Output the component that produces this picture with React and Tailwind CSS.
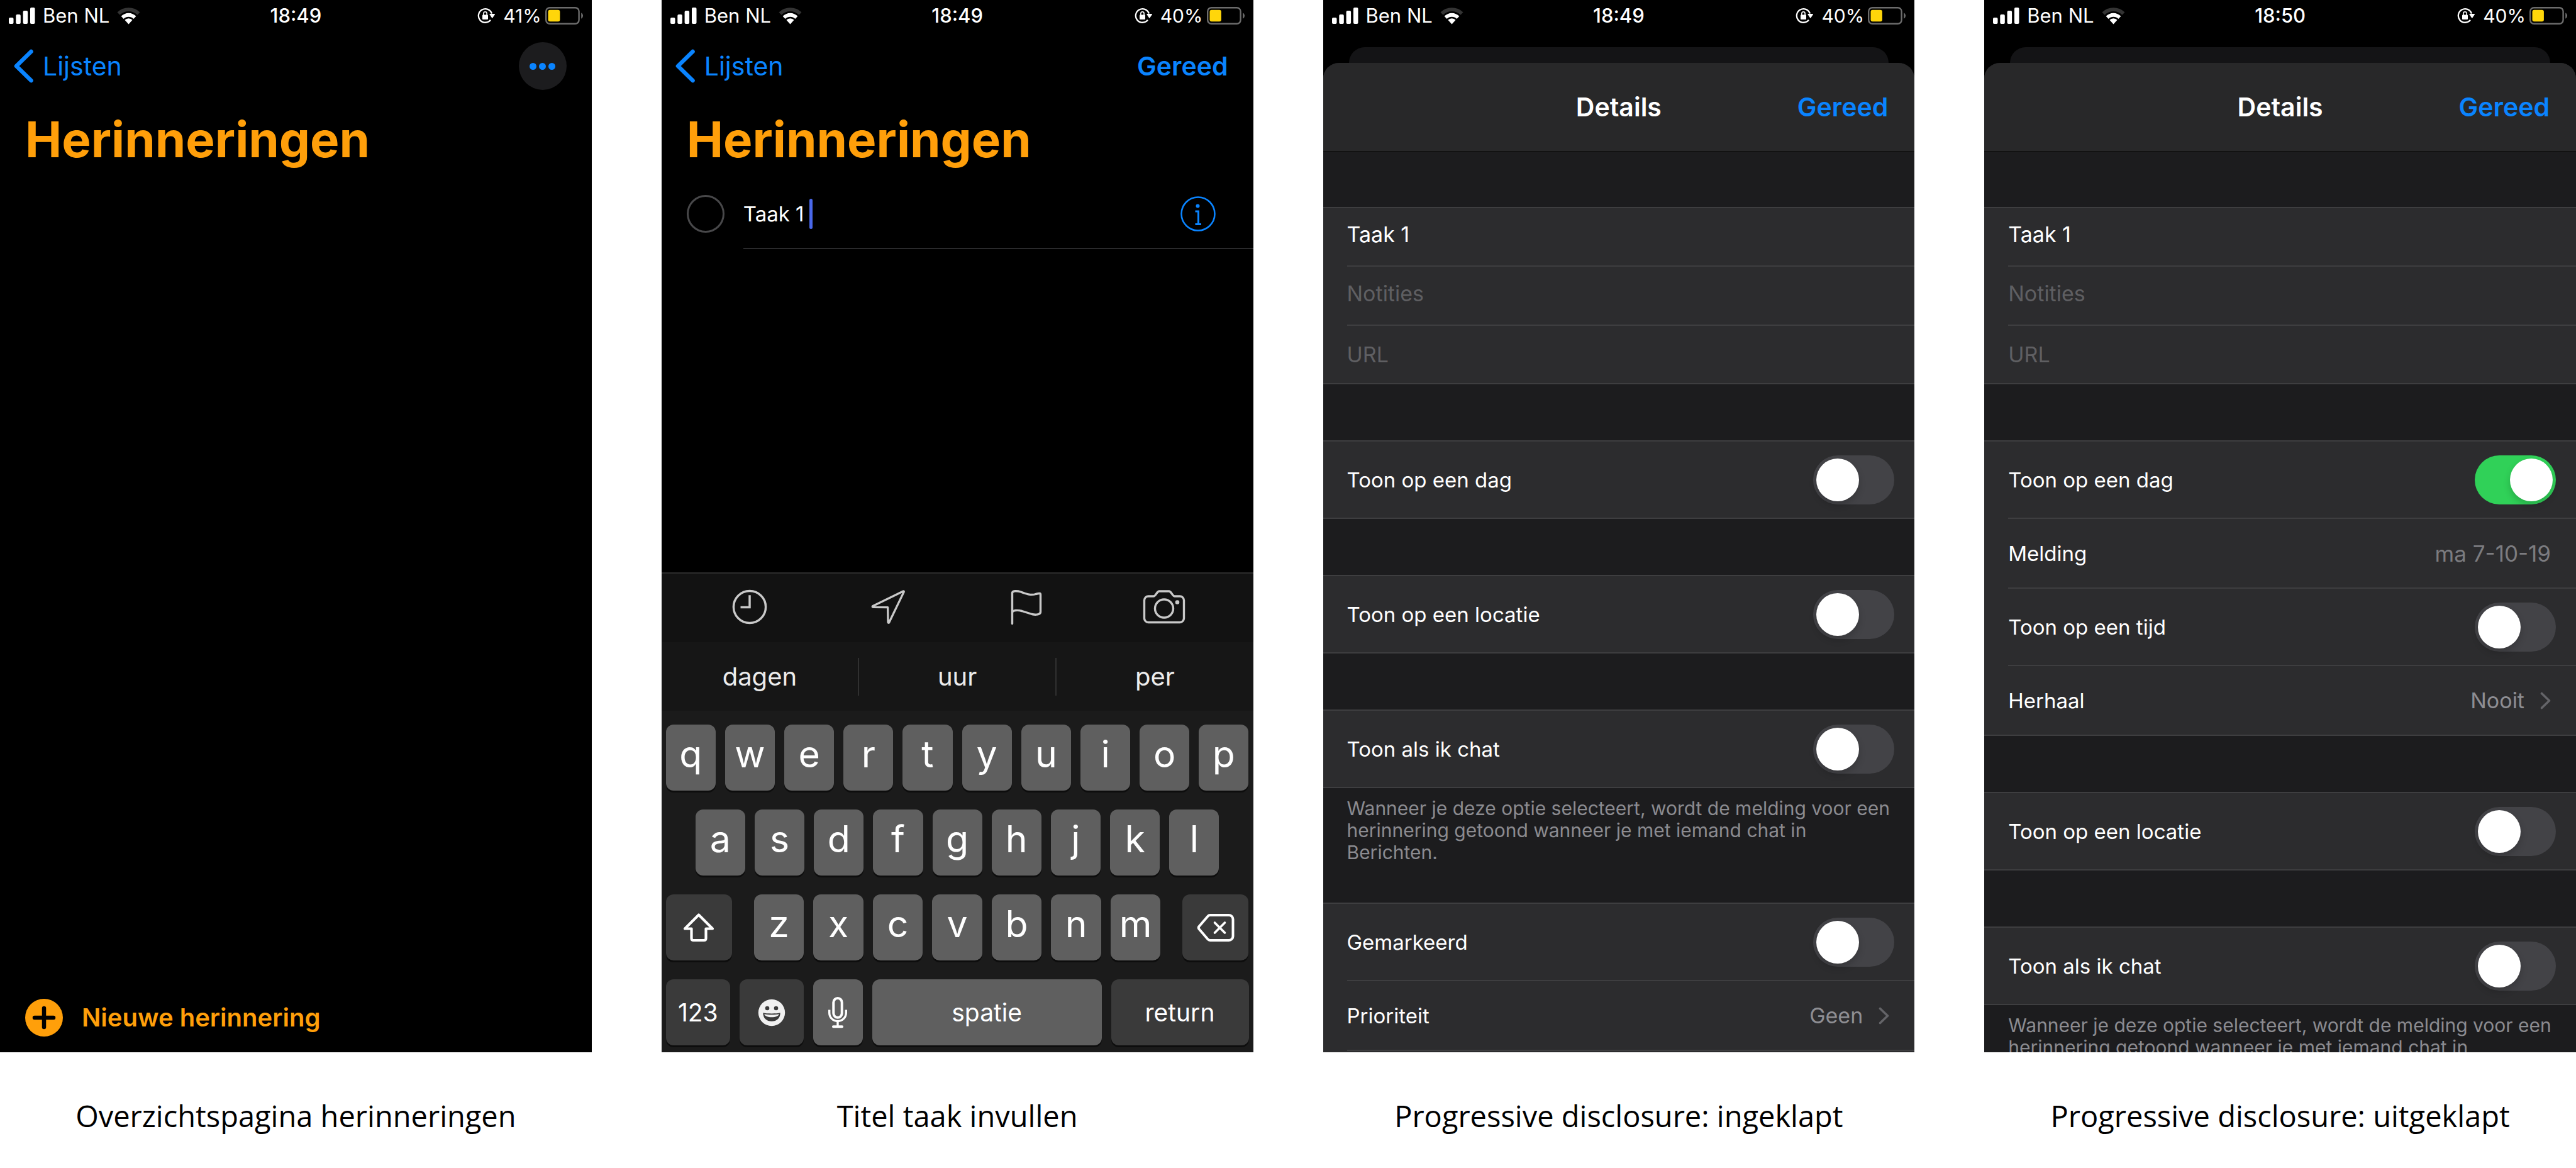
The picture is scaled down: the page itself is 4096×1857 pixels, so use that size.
import React, { useId } from "react";

function Signal() {
  return (
    <svg className="h-[26px] w-[42px]" viewBox="0 0 42 26" fill="#fff" aria-hidden="true">
      <rect x="0" y="16" width="7.5" height="10" rx="2" />
      <rect x="11.3" y="11" width="7.5" height="15" rx="2" />
      <rect x="22.6" y="5" width="7.5" height="21" rx="2" />
      <rect x="34" y="0" width="7.5" height="26" rx="2" />
    </svg>
  );
}

function Wifi() {
  return (
    <svg className="h-[27px] w-[37px]" viewBox="0 0 37 27" aria-hidden="true">
      <path d="M0.5 7.6 A25.5 25.5 0 0 1 36.5 7.6 L32.4 11.7 A19.7 19.7 0 0 0 4.6 11.7 Z" fill="#333" />
      <path d="M6.6 13.8 A16.8 16.8 0 0 1 30.4 13.8 L26.4 17.9 A11.2 11.2 0 0 0 10.6 17.9 Z" fill="#fff" />
      <path d="M12.4 19.8 A8.6 8.6 0 0 1 24.6 19.8 L18.5 26.4 Z" fill="#fff" />
    </svg>
  );
}

function RotationLock() {
  return (
    <svg className="h-[26px] w-[29px]" viewBox="0 0 29 26" fill="none" aria-hidden="true">
      <path d="M22.9 9.6 A10.8 10.8 0 1 0 21 19.8" stroke="#fff" strokeWidth="2.3" />
      <path d="M20 10.6 H27.4 L23.7 16.2 Z" fill="#fff" stroke="#fff" strokeWidth="1.2" strokeLinejoin="round" />
      <rect x="8" y="11.5" width="9" height="7.4" rx="1" fill="#fff" />
      <path d="M9.900 12 V9.400 A2.600 2.600 0 0 1 15.100 9.400 V12" stroke="#fff" strokeWidth="1.600" />
    </svg>
  );
}

function Battery({ level }) {
  return (
    <svg className="h-[28px] w-[60px]" viewBox="0 0 60 28" aria-hidden="true">
      <rect x="1.2" y="1.2" width="52.4" height="25.6" rx="6" fill="none" stroke="#6c6c6c" strokeWidth="2.4" />
      <path d="M57.200 9.200 A5.500 5.500 0 0 1 57.200 18.800 Z" fill="#6c6c6c" />
      <rect x="4.5" y="4.7" width={level * 0.46} height="18.6" rx="3" fill="#ffd60a" />
    </svg>
  );
}

function StatusBar({ time, level }) {
  return (
    <div className="grid h-[50px] shrink-0 grid-cols-3 items-center px-[14px] text-[31px] leading-[36px] text-white">
      <div className="flex items-center gap-[12px]">
        <Signal />
        <span>Ben NL</span>
        <Wifi />
      </div>
      <time className="text-center font-medium">{time}</time>
      <div className="flex items-center justify-end gap-[6px]">
        <RotationLock />
        <span className="pl-[6px] text-[30px]">{level}%</span>
        <Battery level={level} />
      </div>
    </div>
  );
}

function Phone({ caption, time, level, children }) {
  return (
    <figure className="flex min-w-0 flex-1 flex-col">
      <div className="flex aspect-[375/667] flex-col overflow-hidden bg-black">
        <StatusBar time={time} level={level} />
        {children}
      </div>
      <figcaption className="pt-[65px] text-center font-['Open_Sans','Noto_Sans',sans-serif] text-[47px] leading-[72px] text-black">
        {caption}
      </figcaption>
    </figure>
  );
}

function NavBar({ children }) {
  return (
    <nav className="flex h-[110px] shrink-0 items-center justify-between pl-[21px] pr-[40px] text-[#0a84ff]">
      <a href="#lijsten" className="flex items-center gap-[15px] text-[41px] leading-[52px]">
        <svg className="h-[54px] w-[32px]" viewBox="0 0 32 54" fill="none" aria-hidden="true">
          <path d="M28.5 4 L5 27 L28.5 50" stroke="#0a84ff" strokeWidth="6.6" strokeLinecap="round" strokeLinejoin="round" />
        </svg>
        Lijsten
      </a>
      {children}
    </nav>
  );
}

function Title() {
  return (
    <h1 className="shrink-0 pl-[40px] pt-[11px] text-[78px] font-bold leading-[102px] text-[#ff9f0a]">
      Herinneringen
    </h1>
  );
}

function Overview() {
  return (
    <Phone caption="Overzichtspagina herinneringen" time="18:49" level={41}>
      <NavBar>
        <button aria-label="Meer" className="flex size-[76px] items-center justify-center gap-[4px] rounded-full bg-[#1c1c1e]">
          <span className="size-[11px] rounded-full bg-[#0a84ff]" />
          <span className="size-[11px] rounded-full bg-[#0a84ff]" />
          <span className="size-[11px] rounded-full bg-[#0a84ff]" />
        </button>
      </NavBar>
      <Title />
      <button className="mt-auto flex h-[111px] shrink-0 items-center gap-[30px] pl-[40px] text-[40px] font-semibold leading-[52px] text-[#ff9f0a]">
        <svg className="size-[60px]" viewBox="0 0 60 60" aria-hidden="true">
          <circle cx="30" cy="30" r="30" fill="#ff9f0a" />
          <path d="M30 15 V45 M15 30 H45" stroke="#000" strokeWidth="6.5" strokeLinecap="round" />
        </svg>
        Nieuwe herinnering
      </button>
    </Phone>
  );
}

function Key({ children, dark, label, className = "flex-1" }) {
  return (
    <button
      aria-label={label}
      className={
        "flex h-[105px] min-w-0 items-center justify-center rounded-[12px] text-white shadow-[0_3px_0_#0d0d0d] " +
        (dark ? "bg-[#3a3a3a] " : "bg-[#5f5f5f] ") +
        className
      }
    >
      {children}
    </button>
  );
}

function Letters({ keys }) {
  return keys.split("").map((k) => (
    <Key key={k}>
      <span className="pb-[12px] text-[59px] leading-[72px]">{k}</span>
    </Key>
  ));
}

function Tool({ label, children }) {
  return (
    <button aria-label={label} className="flex w-[68px] justify-center">
      {children}
    </button>
  );
}

function Keyboard() {
  return (
    <div className="mt-auto shrink-0 border-t-2 border-[#2c2c2c] bg-[#1a1a1a]">
      <div className="flex h-[109px] items-center justify-between bg-[#121212] pb-[3px] pl-[106px] pr-[107px]">
        <Tool label="Tijd">
          <svg className="size-[56px]" viewBox="0 0 58 58" fill="none" stroke="#c9c9c9" strokeWidth="3.6" aria-hidden="true">
            <circle cx="29" cy="29" r="26.5" />
            <path d="M29 9.5 V29.5 H14" />
          </svg>
        </Tool>
        <Tool label="Locatie">
          <svg className="size-[56px]" viewBox="0 0 58 58" fill="none" stroke="#c9c9c9" strokeWidth="3.4" strokeLinejoin="round" aria-hidden="true">
            <path d="M54 3.2 L3.6 27.8 Q2.6 29.4 5 29.4 L28.6 29.6 L29 54.2 Q30 56.4 31 54.2 L55.2 4 Q55.4 2.6 54 3.2 Z" />
          </svg>
        </Tool>
        <Tool label="Vlag">
          <svg className="size-[58px]" viewBox="0 0 58 58" fill="none" stroke="#c9c9c9" strokeWidth="3.4" strokeLinecap="round" strokeLinejoin="round" aria-hidden="true">
            <path d="M6.500 55.500 V7 C6.500 3 14 3 20 5 C28 8 36 11 44 8.500 C50 7 51.500 7 51.500 9.500 V37 C51.500 41 44 42 38 40.500 L22 35.500 C15 33.500 6.500 34 6.500 38" />
          </svg>
        </Tool>
        <Tool label="Camera">
          <svg className="h-[56px] w-[68px]" viewBox="0 0 68 56" fill="none" stroke="#c9c9c9" strokeWidth="3.4" strokeLinejoin="round" aria-hidden="true">
            <path d="M9 11 H17 C21 11 22 3.500 26 3 H42 C46 3.500 47 11 51 11 H59 A6.500 6.500 0 0 1 65.500 17.500 V46 A6.500 6.500 0 0 1 59 52.500 H9 A6.500 6.500 0 0 1 2.500 46 V17.500 A6.500 6.500 0 0 1 9 11 Z" />
            <circle cx="34" cy="30.500" r="14.500" />
            <circle cx="55" cy="20.500" r="1.600" fill="#c9c9c9" />
          </svg>
        </Tool>
      </div>
      <div className="flex h-[109px] items-center bg-[#161616] text-[40px] leading-[50px] text-[#ececec]">
        <button className="h-[60px] flex-1">dagen</button>
        <button className="h-[60px] flex-1 border-x-2 border-[#303030]">uur</button>
        <button className="h-[60px] flex-1">per</button>
      </div>
      <div className="flex flex-col gap-[30px] bg-[#1b1b1b] px-[7px] pb-[11px] pt-[22px]">
        <div className="flex gap-[15px]">
          <Letters keys="qwertyuiop" />
        </div>
        <div className="flex gap-[15px] px-[47px]">
          <Letters keys="asdfghjkl" />
        </div>
        <div className="flex gap-[15px]">
          <Key dark label="Shift" className="mr-[20px] w-[105px] shrink-0">
            <svg className="size-[50px]" viewBox="0 0 50 50" fill="none" stroke="#fff" strokeWidth="4.2" strokeLinejoin="round" aria-hidden="true">
              <path d="M25 4.500 L3 26.500 H13.500 V42 Q13.500 45 16.500 45 H33.500 Q36.500 45 36.500 42 V26.500 H47 Z" />
            </svg>
          </Key>
          <Letters keys="zxcvbnm" />
          <Key dark label="Wis" className="ml-[20px] w-[105px] shrink-0">
            <svg className="h-[46px] w-[60px]" viewBox="0 0 60 46" fill="none" stroke="#fff" strokeWidth="4" strokeLinejoin="round" strokeLinecap="round" aria-hidden="true">
              <path d="M21 3 H51 A6.500 6.500 0 0 1 57.500 9.500 V36.500 A6.500 6.500 0 0 1 51 43 H21 Q19 43 17.500 41.300 L3.500 25 Q2 23 3.500 21 L17.500 4.700 Q19 3 21 3 Z" />
              <path d="M28.500 15 L44.500 31 M44.500 15 L28.500 31" strokeWidth="3.600" />
            </svg>
          </Key>
        </div>
        <div className="flex gap-[15px]">
          <Key dark className="w-[102px] shrink-0">
            <span className="text-[39px] leading-[48px]">123</span>
          </Key>
          <Key dark label="Emoji" className="w-[102px] shrink-0">
            <svg className="size-[44px]" viewBox="0 0 44 44" aria-hidden="true">
              <circle cx="22" cy="22" r="21.200" fill="#f0f0f0" />
              <circle cx="15" cy="15" r="3.300" fill="#3a3a3a" />
              <circle cx="29" cy="15" r="3.300" fill="#3a3a3a" />
              <path d="M8.300 22.200 C14 23.800 30 23.800 35.700 22.200 C35.700 31 30 35.700 22 35.700 C14 35.700 8.300 31 8.300 22.200 Z" fill="#3a3a3a" />
              <path d="M10.300 24.200 C16 25.700 28 25.700 33.700 24.200 C33 27.500 28 29.200 22 29.200 C16 29.200 11 27.500 10.300 24.200 Z" fill="#f0f0f0" />
            </svg>
          </Key>
          <Key label="Dicteer" className="w-[79px] shrink-0">
            <svg className="h-[50px] w-[32px]" viewBox="0 0 32 50" fill="none" stroke="#fff" aria-hidden="true">
              <rect x="9.300" y="2" width="13.400" height="30.800" rx="6.700" strokeWidth="4" />
              <path d="M2.700 20.500 V25.200 A13.300 13.300 0 0 0 29.300 25.200 V20.500 M16 38.500 V46" strokeWidth="3.400" />
              <path d="M9 47.300 H23" strokeWidth="4" strokeLinecap="round" />
            </svg>
          </Key>
          <Key>
            <span className="text-[39px] leading-[48px]">spatie</span>
          </Key>
          <Key dark className="w-[219px] shrink-0">
            <span className="text-[39px] leading-[48px]">return</span>
          </Key>
        </div>
      </div>
    </div>
  );
}

function NewTask() {
  return (
    <Phone caption="Titel taak invullen" time="18:49" level={40}>
      <NavBar>
        <button className="text-[41px] font-semibold leading-[52px]">Gereed</button>
      </NavBar>
      <Title />
      <div className="flex shrink-0 items-stretch gap-[30px] pl-[40px] pt-[13px]">
        <input
          type="radio"
          name="taak"
          aria-label="Taak 1 voltooid"
          className="mt-[24px] size-[60px] shrink-0 appearance-none rounded-full border-3 border-[#48484a]"
        />
        <div className="flex h-[110px] flex-1 items-center border-b-2 border-[#2a2a2c] pr-[60px]">
          <input
            aria-label="Titel"
            defaultValue="Taak 1"
            className="field-sizing-content bg-transparent text-[33px] leading-[44px] text-white outline-none"
          />
          <span className="ml-[8px] h-[48px] w-[5px] rounded-full bg-[#4a68ea]" />
          <button aria-label="Info" className="ml-auto">
            <svg className="size-[56px]" viewBox="0 0 56 56" fill="none" stroke="#0a84ff" aria-hidden="true">
              <circle cx="28" cy="28" r="26.500" strokeWidth="2.600" />
              <circle cx="27.500" cy="15.500" r="3" fill="#0a84ff" stroke="none" />
              <path d="M23.500 24 H28.500 V44 M23.500 44.500 H33" strokeWidth="3" />
            </svg>
          </button>
        </div>
      </div>
      <Keyboard />
    </Phone>
  );
}

function Sheet({ children }) {
  return (
    <div className="flex min-h-0 flex-1 flex-col pt-[25px]">
      <div className="mx-[41px] h-[25px] shrink-0 rounded-t-[25px] bg-[#141416]" />
      <section className="flex min-h-0 flex-1 flex-col overflow-hidden rounded-t-[25px] bg-[#1c1c1e] text-[33px] leading-[44px] text-white">
        <header className="grid h-[142px] shrink-0 grid-cols-3 items-center border-b-2 border-[#121212] bg-[#282829] px-[42px] text-[41px] font-semibold leading-[52px]">
          <h2 className="col-start-2 text-center">Details</h2>
          <button className="justify-self-end text-[#0a84ff]">Gereed</button>
        </header>
        <div className="flex flex-col gap-[89px] pt-[87px]">{children}</div>
      </section>
    </div>
  );
}

function Group({ children }) {
  return (
    <div className="flex shrink-0 flex-col border-y-2 border-[#3e3e40] bg-[#2c2c2e] pl-[38px]">{children}</div>
  );
}

const divider = "box-content border-b-2 border-[#3e3e40] last:border-b-0 ";

function Field({ label, value, className }) {
  return (
    <input
      aria-label={label}
      placeholder={label}
      defaultValue={value}
      className={
        divider + "bg-transparent text-[34px] text-white outline-none placeholder:text-[#5f5f62] " + className
      }
    />
  );
}

function Fields() {
  return (
    <Group>
      <Field label="Titel" value="Taak 1" className="h-[83px] pb-[8px]" />
      <Field label="Notities" className="h-[84px] pb-[8px]" />
      <Field label="URL" className="h-[91px]" />
    </Group>
  );
}

function SwitchRow({ label, on = false }) {
  const id = useId();
  return (
    <div className={divider + "flex h-[121px] items-center justify-between pr-[32px]"}>
      <label htmlFor={id}>{label}</label>
      <input
        id={id}
        type="checkbox"
        role="switch"
        defaultChecked={on}
        className="h-[78px] w-[129px] shrink-0 appearance-none rounded-full bg-[#434347] p-[5px] before:block before:size-[68px] before:rounded-full before:bg-white before:shadow-[0_6px_12px_rgba(0,0,0,0.18)] before:content-[''] checked:bg-[#30d158] checked:before:translate-x-[51px]"
      />
    </div>
  );
}

function ValueRow({ label, value, arrow }) {
  return (
    <button className={divider + "flex h-[109px] shrink-0 items-center pr-[40px] text-left"}>
      <span className="flex-1">{label}</span>
      <span className={arrow ? "text-[34px] text-[#8e8e93]" : "text-[35px] text-[#7c7c80]"}>{value}</span>
      {arrow && (
        <svg className="ml-[25px] h-[28px] w-[17px]" viewBox="0 0 17 28" fill="none" aria-hidden="true">
          <path d="M2.500 2.500 L14.500 14 L2.500 25.500" stroke="#646468" strokeWidth="3.600" strokeLinecap="round" strokeLinejoin="round" />
        </svg>
      )}
    </button>
  );
}

function ChatGroup() {
  return (
    <div className="-mb-[27px] flex shrink-0 flex-col">
      <Group>
        <SwitchRow label="Toon als ik chat" />
      </Group>
      <p className="pl-[38px] pr-[30px] pt-[15px] text-[30px] leading-[35px] text-[#8b8b90]">
        Wanneer je deze optie selecteert, wordt de melding voor een herinnering getoond wanneer je met iemand chat in
        Berichten.
      </p>
    </div>
  );
}

function Collapsed() {
  return (
    <Phone caption="Progressive disclosure: ingeklapt" time="18:49" level={40}>
      <Sheet>
        <Fields />
        <Group>
          <SwitchRow label="Toon op een dag" />
        </Group>
        <Group>
          <SwitchRow label="Toon op een locatie" />
        </Group>
        <ChatGroup />
        <Group>
          <SwitchRow label="Gemarkeerd" />
          <ValueRow label="Prioriteit" value="Geen" arrow />
          <div className="h-[10px]" />
        </Group>
      </Sheet>
    </Phone>
  );
}

function Expanded() {
  return (
    <Phone caption="Progressive disclosure: uitgeklapt" time="18:50" level={40}>
      <Sheet>
        <Fields />
        <Group>
          <SwitchRow label="Toon op een dag" on />
          <ValueRow label="Melding" value="ma 7-10-19" />
          <SwitchRow label="Toon op een tijd" />
          <ValueRow label="Herhaal" value="Nooit" arrow />
        </Group>
        <Group>
          <SwitchRow label="Toon op een locatie" />
        </Group>
        <ChatGroup />
      </Sheet>
    </Phone>
  );
}

export default function App() {
  return (
    <main className="flex min-h-screen w-full items-start gap-[111px] overflow-hidden bg-white font-['Inter','Liberation_Sans',sans-serif]">
      <Overview />
      <NewTask />
      <Collapsed />
      <Expanded />
    </main>
  );
}
